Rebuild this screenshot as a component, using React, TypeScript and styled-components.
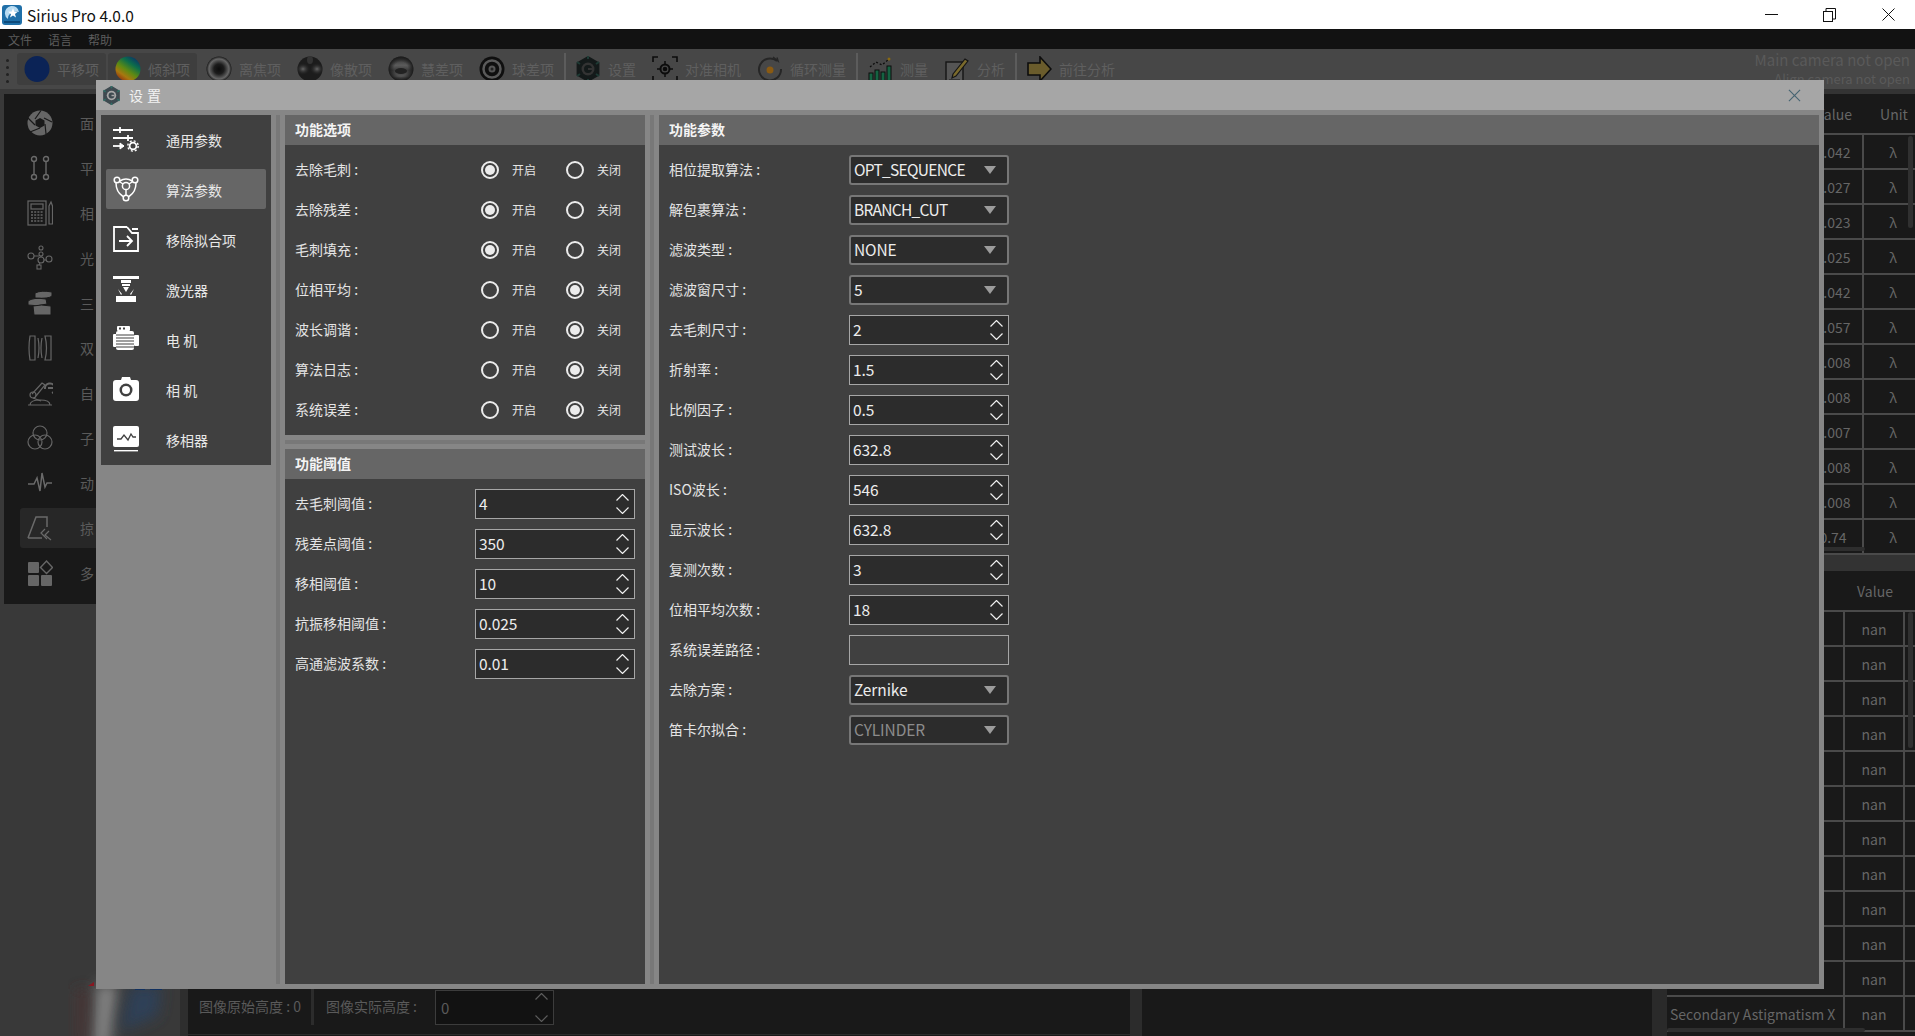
import React, { ReactNode } from 'react';
import styled, { createGlobalStyle } from 'styled-components';

const sans = `"Noto Sans CJK SC", "Noto Sans", sans-serif`;

const GlobalStyle = createGlobalStyle`
  html, body {
    margin: 0;
    padding: 0;
    background: #333;
    font-family: ${sans};
  }
`;

const Page = styled.div`
  position: relative;
  width: 1915px;
  height: 1036px;
  overflow: hidden;
  display: flex;
  flex-direction: column;
  background: #393939;
`;

/* window chrome */
const TitleBar = styled.div`
  height: 29px;
  flex: none;
  background: #fff;
  display: flex;
  align-items: center;
  padding-left: 2px;
  color: #111;
  font-size: 15.5px;
`;

const TitleText = styled.span`
  flex: 1;
  margin-left: 5px;
  font-family: ${sans};
`;

const WindowButton = styled.div`
  width: 58.5px;
  height: 29px;
  box-sizing: border-box;
  padding-left: 5px;
  display: flex;
  align-items: center;
  justify-content: center;
`;

const MenuBar = styled.div`
  height: 20px;
  flex: none;
  background: #121212;
  display: flex;
  align-items: center;
  gap: 16px;
  padding-left: 8px;
  color: #5c5c5c;
  font-size: 12px;
`;

const Toolbar = styled.div`
  height: 40px;
  flex: none;
  box-sizing: border-box;
  background: #474747;
  display: flex;
  align-items: flex-start;
  padding: 4px 5px 0 5px;
  color: #5f5f5f;
  font-size: 14px;
`;

const Grip = styled.div`
  width: 4px;
  height: 24px;
  margin: 6px 8px 0 0;
  display: flex;
  flex-direction: column;
  justify-content: space-between;
  align-items: center;
  & > i {
    width: 3px;
    height: 3px;
    border-radius: 50%;
    background: #222;
  }
`;

const ToolButton = styled.div<{ $active?: boolean }>`
  height: 32px;
  display: flex;
  align-items: center;
  gap: 7px;
  padding: 0 7px;
  margin-right: 2px;
  border-radius: 3px;
  background: ${(p) => (p.$active ? '#3e3e3e' : 'transparent')};
  white-space: nowrap;
`;

const ToolSep = styled.div`
  width: 2px;
  height: 32px;
  margin: 0 2px 0 1px;
  background: #5c5c5c;
`;

const CameraStatus = styled.div`
  margin: -3px 0 0 auto;
  display: flex;
  flex-direction: column;
  align-items: flex-end;
  line-height: 19px;
  font-size: 15px;
  color: #5a5a5a;
  & > span + span {
    font-size: 13px;
  }
`;

/* dimmed main window behind the dialog */
const Workspace = styled.div`
  flex: 1;
  min-height: 0;
  display: flex;
`;

const LeftColumn = styled.div`
  width: 180px;
  flex: none;
  position: relative;
  padding: 5px 0 0 4px;
  box-sizing: border-box;
`;

const LeftPanel = styled.div`
  height: 510px;
  background: #191919;
  padding: 9px 0 0 16px;
  box-sizing: border-box;
  display: flex;
  flex-direction: column;
  gap: 5px;
`;

const LeftItem = styled.div<{ $active?: boolean }>`
  height: 40px;
  display: flex;
  align-items: center;
  gap: 27px;
  padding-left: 7px;
  border-radius: 3px;
  background: ${(p) => (p.$active ? '#272727' : 'transparent')};
  color: #5a5a5a;
  font-size: 14px;
`;

const Watermark = styled.svg`
  position: absolute;
  left: 50px;
  bottom: 0;
`;

const VBar = styled.div`
  width: 8px;
  flex: none;
  background: #2e2e2e;
`;

const Center = styled.div`
  flex: 1;
  min-width: 0;
  display: flex;
  flex-direction: column;
  justify-content: flex-end;
  background: #191919;
`;

const BottomBar = styled.div`
  height: 47px;
  display: flex;
  align-items: flex-start;
  color: #5a5a5a;
  font-size: 14px;
`;

const BottomInfo = styled.div`
  width: 942px;
  height: 46px;
  flex: none;
  display: flex;
  align-items: flex-start;
  padding-left: 11px;
  box-sizing: border-box;
  border-bottom: 1px solid #2c2c2c;
`;

const InfoText = styled.span`
  height: 36px;
  padding-bottom: 2px;
  box-sizing: border-box;
  display: flex;
  align-items: center;
  white-space: pre;
`;

const InfoSep = styled.div`
  width: 3px;
  height: 36px;
  margin: 0 12px 0 10px;
  background: #2c2c2c;
`;

const GhostSpin = styled.div`
  width: 119px;
  height: 35px;
  margin: 1px 0 0 18px;
  border: 1px solid #3c3c3c;
  box-sizing: border-box;
  display: flex;
  align-items: center;
  justify-content: space-between;
  padding: 0 5px;
  background: #121212;
  font-size: 15px;
`;

const GhostArrows = styled.div`
  display: flex;
  flex-direction: column;
  gap: 15px;
`;

const BarDivider = styled.div`
  width: 12px;
  flex: none;
  align-self: stretch;
  background: #2c2c2c;
`;

const RightColumn = styled.div`
  width: 263px;
  flex: none;
  display: flex;
  background: #333;
`;

const RightGutter = styled.div`
  width: 15px;
  flex: none;
  background: #2a2a2a;
`;

const Tables = styled.div`
  flex: 1;
  min-width: 0;
  overflow: hidden;
  display: flex;
  flex-direction: column;
  padding-top: 5px;
`;

const TableBox = styled.div<{ $height: number }>`
  position: relative;
  height: ${(p) => p.$height}px;
  flex: none;
  overflow: hidden;
  background: #191919;
  color: #666;
  font-size: 14px;
`;

const TableGap = styled.div`
  height: 16px;
  flex: none;
  background: #333;
`;

const TableRow = styled.div<{ $cols: string; $height: number }>`
  display: grid;
  grid-template-columns: ${(p) => p.$cols};
  height: ${(p) => p.$height}px;
  box-sizing: border-box;
  border-bottom: 2px solid #4a4a4a;
`;

const Cell = styled.div<{ $left?: boolean }>`
  display: flex;
  align-items: center;
  justify-content: ${(p) => (p.$left ? 'flex-start' : 'center')};
  padding-left: ${(p) => (p.$left ? '3px' : '0')};
  white-space: nowrap;
  overflow: hidden;
  box-sizing: border-box;
  border-right: 2px solid #4a4a4a;
`;

const HeadCell = styled.div`
  display: flex;
  align-items: center;
  justify-content: center;
  color: #666;
`;

const ScrollV = styled.div<{ $top: number; $height: number }>`
  position: absolute;
  left: 241px;
  top: ${(p) => p.$top}px;
  width: 5px;
  height: ${(p) => p.$height}px;
  border-radius: 3px;
  background: #303030;
`;

const ScrollH = styled.div`
  position: absolute;
  left: 0;
  bottom: 4px;
  width: 198px;
  height: 4px;
  border-radius: 2px;
  background: #2e2e2e;
`;

/* settings dialog */
const Dialog = styled.div`
  position: absolute;
  left: 96px;
  top: 80px;
  width: 1728px;
  height: 909px;
  background: #868686;
  display: flex;
  flex-direction: column;
`;

const DialogHeader = styled.div`
  height: 30px;
  flex: none;
  background: #a6a6a6;
  display: flex;
  align-items: center;
  padding: 0 23px 0 6px;
  gap: 8px;
  color: #f2f2f2;
  font-size: 14px;
`;

const DialogTitle = styled.span`
  flex: 1;
  letter-spacing: 4px;
`;

const DialogBody = styled.div`
  flex: 1;
  min-height: 0;
  display: flex;
  padding: 5px;
  color: #e4e4e4;
`;

const Nav = styled.div`
  width: 170px;
  height: 350px;
  flex: none;
  background: #404040;
  padding: 4px 5px 0;
  box-sizing: border-box;
  display: flex;
  flex-direction: column;
  gap: 10px;
`;

const NavItem = styled.div<{ $active?: boolean }>`
  height: 40px;
  flex: none;
  display: flex;
  align-items: center;
  gap: 27px;
  padding-left: 7px;
  border-radius: 2px;
  background: ${(p) => (p.$active ? '#666' : 'transparent')};
  color: #e8e8e8;
  font-size: 14px;
  white-space: pre;
`;

const NavLabel = styled.span`
  padding-top: 2px;
`;

const SplitV = styled.div`
  width: 14px;
  flex: none;
  display: flex;
  justify-content: center;
  &::after {
    content: '';
    width: 4px;
    background: #787878;
  }
`;

const SplitH = styled.div`
  height: 14px;
  flex: none;
  display: flex;
  flex-direction: column;
  justify-content: center;
  &::after {
    content: '';
    height: 4px;
    background: #787878;
  }
`;

const MiddleColumn = styled.div`
  width: 360px;
  flex: none;
  display: flex;
  flex-direction: column;
`;

const Panel = styled.div<{ $height?: number }>`
  background: #404040;
  display: flex;
  flex-direction: column;
  ${(p) => (p.$height ? `height: ${p.$height}px; flex: none;` : 'flex: 1; min-width: 0;')}
`;

const PanelHeader = styled.div`
  height: 30px;
  flex: none;
  box-sizing: border-box;
  display: flex;
  align-items: center;
  padding: 0 0 2px 10px;
  background: #666;
  color: #f4f4f4;
  font-size: 14px;
  font-weight: 700;
`;

const Rows = styled.div`
  display: flex;
  flex-direction: column;
  gap: 10px;
  padding: 10px 10px 0;
`;

const FormRow = styled.div`
  height: 30px;
  display: flex;
  align-items: center;
  font-size: 14px;
`;

const FormLabel = styled.span<{ $width: number }>`
  width: ${(p) => p.$width}px;
  flex: none;
  padding-bottom: 2px;
  white-space: pre;
`;

const RadioOption = styled.div`
  width: 85px;
  flex: none;
  display: flex;
  align-items: center;
  gap: 13px;
  font-size: 12px;
`;

const RadioText = styled.span`
  padding-bottom: 2px;
`;

const RadioRing = styled.span<{ $on?: boolean }>`
  width: 18px;
  height: 18px;
  flex: none;
  box-sizing: border-box;
  border: 2px solid #ececec;
  border-radius: 50%;
  display: flex;
  align-items: center;
  justify-content: center;
  &::after {
    content: '';
    width: 10px;
    height: 10px;
    border-radius: 50%;
    background: ${(p) => (p.$on ? '#ececec' : 'transparent')};
  }
`;

const Field = styled.div<{ $muted?: boolean; $blank?: boolean; $combo?: boolean }>`
  width: 160px;
  height: 30px;
  flex: none;
  box-sizing: border-box;
  display: flex;
  align-items: center;
  justify-content: space-between;
  padding: 0 10px 0 3px;
  background: ${(p) => (p.$blank ? 'transparent' : '#2c2c2c')};
  border: ${(p) => (p.$combo ? '2px solid #777' : '1px solid #a6a6a6')};
  border-radius: ${(p) => (p.$combo ? '3px' : '0')};
  color: ${(p) => (p.$muted ? '#8c8c8c' : '#ececec')};
  font-size: 15.5px;
`;

const FieldValue = styled.span<{ $tight?: boolean }>`
  padding-bottom: 2px;
  letter-spacing: ${(p) => (p.$tight ? '-0.7px' : '-0.1px')};
`;

const SpinArrows = styled.div`
  display: flex;
  flex-direction: column;
  gap: 6px;
  margin-right: -5px;
`;

const ComboArrow = styled.i`
  width: 0;
  height: 0;
  margin-right: 1px;
  border-left: 6px solid transparent;
  border-right: 6px solid transparent;
  border-top: 8px solid #9c9c9c;
`;

/* little shared drawings */
type IconProps = { children: ReactNode; color?: string; size?: number };

const Ico = ({ children, color = 'currentColor', size = 26 }: IconProps) => (
  <svg width={size} height={size} viewBox="0 0 26 26" fill="none" stroke={color} strokeWidth="1.3" style={{ flex: 'none' }}>
    {children}
  </svg>
);

const Chevron = ({ up, color = '#f0f0f0' }: { up?: boolean; color?: string }) => (
  <svg width="13" height="7" viewBox="0 0 13 7" fill="none" stroke={color} strokeWidth="1.2" style={{ display: 'block' }}>
    <polyline points={up ? '0.5,6.5 6.5,0.5 12.5,6.5' : '0.5,0.5 6.5,6.5 12.5,0.5'} />
  </svg>
);

const Gear = ({ body, hole, tips }: { body: string; hole: string; tips: string }) => (
  <>
    <path d="M13 1 L23.4 7 V19 L13 25 L2.6 19 V7 Z" fill={body} stroke={body} strokeWidth="2" strokeLinejoin="round" />
    <path d="M13 0 V3 M2 6 L5 8 M24 6 L21 8 M2 20 L5 18 M24 20 L21 18 M13 26 V23" stroke={tips} strokeWidth="2" />
    <circle cx="13" cy="13" r="6.5" fill={hole} stroke="none" />
    <circle cx="13" cy="13" r="4" fill={body} stroke="none" />
    <rect x="13" y="12" width="4" height="2" fill={hole} stroke="none" />
  </>
);

const AppLogo = () => (
  <svg width="20" height="20" viewBox="0 0 20 20" style={{ flex: 'none' }}>
    <rect width="20" height="20" rx="3" fill="#1f6fa8" />
    <path d="M3 9 a7 7 0 0 1 14 -2 a8 8 0 0 0 -7 1 a6 6 0 0 0 -4 6 a6 6 0 0 1 -3 -5z" fill="#b9dcf2" />
    <path d="M11 3 l1.2 3.5 3.6 .2 -2.8 2.2 1 3.5 -3 -2 -3 2 1 -3.5 -2.8 -2.2 3.6 -.2z" fill="#fff" />
    <rect x="2" y="16" width="16" height="2" fill="#0e4a7a" />
  </svg>
);

const toolIcons: Record<string, ReactNode> = {
  shift: <ellipse cx="13" cy="13" rx="12.5" ry="13" fill="#0b2356" stroke="none" />,
  tilt: (
    <>
      <defs>
        <linearGradient id="tiltFill" x1="0.85" y1="0" x2="0.15" y2="1">
          <stop offset="0" stopColor="#0a2a6e" />
          <stop offset="0.3" stopColor="#0d6e4a" />
          <stop offset="0.55" stopColor="#5f8a12" />
          <stop offset="0.75" stopColor="#a8780f" />
          <stop offset="1" stopColor="#8a1d10" />
        </linearGradient>
      </defs>
      <circle cx="13" cy="13" r="12.5" fill="url(#tiltFill)" stroke="none" />
    </>
  ),
  defocus: (
    <>
      <defs>
        <radialGradient id="defocusFill">
          <stop offset="0" stopColor="#0c0c0c" />
          <stop offset="0.4" stopColor="#1c1c1c" />
          <stop offset="0.8" stopColor="#666" />
          <stop offset="1" stopColor="#1a1a1a" />
        </radialGradient>
        <radialGradient id="edgeFade">
          <stop offset="0.55" stopColor="#1a1a1a" stopOpacity="0" />
          <stop offset="1" stopColor="#1a1a1a" />
        </radialGradient>
      </defs>
      <circle cx="13" cy="13" r="12.5" fill="url(#defocusFill)" stroke="none" />
    </>
  ),
  astig: (
    <>
      <defs>
        <radialGradient id="astigBlob">
          <stop offset="0" stopColor="#666" />
          <stop offset="1" stopColor="#222" stopOpacity="0" />
        </radialGradient>
      </defs>
      <circle cx="13" cy="13" r="12.5" fill="#1c1c1c" stroke="none" />
      <ellipse cx="6" cy="13" rx="7" ry="6" fill="url(#astigBlob)" stroke="none" />
      <ellipse cx="20" cy="13" rx="7" ry="6" fill="url(#astigBlob)" stroke="none" />
      <ellipse cx="13" cy="4" rx="3" ry="4" fill="#333" stroke="none" />
    </>
  ),
  coma: (
    <>
      <defs>
        <linearGradient id="comaFill" x1="0" y1="0" x2="0" y2="1">
          <stop offset="0" stopColor="#2a2a2a" />
          <stop offset="0.35" stopColor="#5c5c5c" />
          <stop offset="0.55" stopColor="#3a3a3a" />
          <stop offset="0.8" stopColor="#555" />
          <stop offset="1" stopColor="#2a2a2a" />
        </linearGradient>
      </defs>
      <circle cx="13" cy="13" r="12.5" fill="url(#comaFill)" stroke="none" />
      <ellipse cx="13" cy="15" rx="6" ry="3" fill="#222" stroke="none" />
      <circle cx="13" cy="13" r="12.5" fill="url(#edgeFade)" stroke="none" />
    </>
  ),
  spherical: (
    <>
      <circle cx="13" cy="13" r="12.5" fill="#0f0f0f" stroke="none" />
      <circle cx="13" cy="13" r="8.5" fill="none" stroke="#5a5a5a" strokeWidth="2.5" />
      <circle cx="13" cy="13" r="3.5" fill="#555" stroke="none" />
      <circle cx="13" cy="13" r="1.5" fill="#222" stroke="none" />
    </>
  ),
  gear: <Gear body="#141a1a" hole="#333" tips="#1d3a34" />,
  target: (
    <g stroke="#0c0c0c" strokeWidth="1.6">
      <path d="M1 6 V1 H6 M20 1 H25 V6 M1 20 V25 H6 M20 25 H25 V20" />
      <circle cx="13" cy="13" r="4.5" strokeWidth="2" />
      <circle cx="13" cy="13" r="1.5" fill="#0c0c0c" />
      <path d="M13 5 V8.5 M13 17.5 V21 M5 13 H8.5 M17.5 13 H21" strokeWidth="1.5" />
    </g>
  ),
  cycle: (
    <>
      <path d="M20 5 A11 11 0 1 0 24 13" stroke="#262626" strokeWidth="2" />
      <path d="M16 1 L21 5 L20 1.5" stroke="#262626" strokeWidth="1.5" />
      <circle cx="13" cy="14" r="3.5" fill="#8a5a12" stroke="none" />
    </>
  ),
  chart: (
    <>
      <rect x="2" y="17" width="4" height="8" fill="#156342" stroke="#0d0d0d" strokeWidth="1" />
      <rect x="8" y="14" width="4" height="11" fill="#156342" stroke="#0d0d0d" strokeWidth="1" />
      <rect x="14" y="16" width="4" height="9" fill="#156342" stroke="#0d0d0d" strokeWidth="1" />
      <rect x="20" y="10" width="4" height="15" fill="#156342" stroke="#0d0d0d" strokeWidth="1" />
      <path d="M3 11 L9 6 L15 9 L22 3" stroke="#0d0d0d" strokeDasharray="2 2" />
      <circle cx="22" cy="3" r="1.5" fill="#8a6a12" stroke="none" />
    </>
  ),
  edit: (
    <>
      <rect x="2" y="6" width="17" height="20" fill="#555" stroke="#151515" strokeWidth="1.4" />
      <path d="M9 18 L21 3 L24 5 L12 20 L8 22 Z" fill="#7a6a2c" stroke="#151515" strokeWidth="1.2" />
      <path d="M5 24 H16" stroke="#222" />
    </>
  ),
  arrow: (
    <path d="M2 7 H14 V1 L25 13 L14 25 V19 H2 Z" fill="#6a5c2c" stroke="#0d0d0d" strokeWidth="1.6" />
  ),
};

const leftIcons: ReactNode[] = [
  <>
    <circle cx="13" cy="13" r="12.5" fill="#666" stroke="none" />
    <path d="M8 9 L14 0.5 M17 8 L25 12 M18 14 L19 24 M13 18 L3 22 M8 15 L1 8" stroke="#191919" strokeWidth="1.2" />
    <path d="M13 8 L17.5 10.5 V15.5 L13 18 L8.5 15.5 V10.5 Z" fill="#191919" stroke="none" />
  </>,
  <g stroke="#6a6a6a" strokeWidth="1.4">
    <circle cx="7" cy="4" r="2.5" />
    <circle cx="19" cy="4" r="2.5" />
    <circle cx="7" cy="22" r="2.5" />
    <circle cx="19" cy="22" r="2.5" />
    <path d="M7 6.5 V19.5 M19 6.5 V19.5" />
  </g>,
  <g stroke="#666" strokeWidth="1.2">
    <rect x="1" y="1" width="18" height="24" />
    <rect x="4" y="4" width="12" height="5" />
    <path d="M4 12 H16 M4 15 H16 M4 18 H16 M4 21 H16" strokeDasharray="2 1.2" strokeWidth="1.6" />
    <path d="M22 6 L24 2 L25.5 6 V24 H22 Z" />
  </g>,
  <g stroke="#666" strokeWidth="1.1">
    <circle cx="4" cy="11" r="3" />
    <circle cx="14" cy="3" r="2" />
    <circle cx="14" cy="9" r="2" />
    <circle cx="14" cy="15" r="3" />
    <circle cx="22" cy="14" r="3" />
    <rect x="10" y="20" width="4" height="4" />
    <path d="M7 11 H12 M14 11 V12 M17 15 H19 M13 18 L12 20" />
  </g>,
  <g fill="#666" stroke="#191919" strokeWidth="1">
    <path d="M8 3 Q14 0 25 2 L25 6 Q22 9 8 8 Z" />
    <path d="M1 11 Q6 7 19 9 L20 14 Q10 17 1 15 Z" />
    <path d="M6 16 Q14 14 24 16 V25 H7 Z" />
  </g>,
  <g stroke="#666" strokeWidth="1.2">
    <path d="M3 1 H8 V25 H3 Q1 13 3 1Z" />
    <path d="M18 1 H24 V25 H18 Q21 13 18 1Z" />
    <path d="M11 3 Q13 13 11 23 M15 3 Q13 13 15 23" />
  </g>,
  <g stroke="#666" strokeWidth="1.2">
    <path d="M1 25 H25 M3 25 Q3 20 13 20 Q23 20 23 25" />
    <path d="M5 14 L15 3 L18 5 L9 16" />
    <circle cx="6" cy="15" r="3" />
    <path d="M6 18 L14 21" />
    <path d="M18 9 A5 5 0 1 1 25 13 M21 8 L26 8" strokeWidth="2" />
  </g>,
  <g stroke="#666" strokeWidth="1.2">
    <circle cx="13" cy="8" r="7" />
    <circle cx="8" cy="17" r="7" />
    <circle cx="18" cy="17" r="7" />
  </g>,
  <path d="M1 14 H7 L10 8 L13 21 L15 3 L18 17 L20 13 H25" stroke="#6a6a6a" strokeWidth="1.5" />,
  <g stroke="#6a6a6a" strokeWidth="1.5">
    <path d="M1 23 L9 2 H20 V12 M1 23 H15" />
    <path d="M18 14 L14 18 L20 24 M22 16 L18 20 L24 25" strokeWidth="1.2" />
  </g>,
  <g fill="#666" stroke="none">
    <rect x="1" y="2" width="11" height="11" rx="1" />
    <rect x="1" y="15" width="11" height="11" rx="1" />
    <rect x="14" y="15" width="11" height="11" rx="1" />
    <path d="M19.5 1 L25.5 7.5 L19.5 13.5 L13.5 7.5 Z" fill="none" stroke="#666" strokeWidth="1.4" />
  </g>,
];

const navIcons: ReactNode[] = [
  <g stroke="#fff" strokeWidth="1.8">
    <path d="M0 4 H20 M7 1 V7" />
    <path d="M0 12 H20 M15 9 V15" />
    <path d="M0 20 H11" />
    <path d="M7 17 L11 20 L7 23 Z" fill="#fff" strokeWidth="1" />
    <circle cx="20" cy="20" r="3.4" />
    <circle cx="20" cy="20" r="5.2" strokeDasharray="2 2.1" strokeWidth="1.4" />
  </g>,
  <g stroke="#fff" strokeWidth="1.5">
    <circle cx="4" cy="4" r="2.8" />
    <circle cx="22" cy="4" r="2.8" />
    <circle cx="13" cy="22" r="2.8" />
    <circle cx="13" cy="10" r="3.6" />
    <path d="M6.8 5 Q13 1 19.2 5 M3 7 Q3 16 10 20.5 M23 7 Q23 16 16 20.5 M13 14 V19 M7 6 L10 8 M19 6 L16 8" />
  </g>,
  <g stroke="#fff" strokeWidth="1.8">
    <path d="M19 3 H25 M14 1 L19 7 H25 V25 H1 V1 H14" />
    <path d="M6 15 H19 M14 10 L19 15 L14 20" strokeWidth="1.8" />
  </g>,
  <g fill="#fff" stroke="none">
    <rect x="0" y="0" width="26" height="3" />
    <rect x="8" y="4" width="10" height="3" />
    <rect x="9" y="8" width="8" height="2" />
    <path d="M10 11 H16 L13 16 Z" />
    <path d="M5 13 L9 18 L8 19 Z M21 13 L17 18 L18 19 Z" />
    <rect x="3" y="20" width="20" height="6" />
  </g>,
  <g fill="#fff" stroke="none">
    <rect x="4" y="0" width="13" height="5" rx="1" />
    <rect x="6" y="1.5" width="2" height="2" fill="#404040" />
    <rect x="10" y="1.5" width="2" height="2" fill="#404040" />
    <rect x="3" y="5" width="18" height="19" rx="2" />
    <rect x="0" y="8" width="4" height="13" rx="1" />
    <rect x="21" y="9" width="5" height="11" rx="1" />
    <path d="M3 9 H21 M3 12 H21 M3 15 H21 M3 18 H21 M3 21 H21" stroke="#404040" strokeWidth="1.2" />
  </g>,
  <g stroke="none">
    <path d="M3 4 H8 L9 1 H17 L18 4 H23 Q26 4 26 7 V22 Q26 25 23 25 H3 Q0 25 0 22 V7 Q0 4 3 4Z" fill="#fff" />
    <circle cx="13" cy="14" r="6.5" fill="#404040" />
    <circle cx="13" cy="14" r="4" fill="#fff" />
  </g>,
  <g stroke="none">
    <rect x="0" y="0" width="26" height="21" rx="2" fill="#fff" />
    <rect x="1" y="24" width="24" height="1.4" fill="#fff" />
    <path d="M4 13 H8 L11 9 L15 14 L18 8 L20 11 H23" fill="none" stroke="#404040" strokeWidth="1.3" />
  </g>,
];

const tools = [
  { icon: 'shift', label: '平移项', active: true },
  { icon: 'tilt', label: '倾斜项', active: true },
  { icon: 'defocus', label: '离焦项' },
  { icon: 'astig', label: '像散项' },
  { icon: 'coma', label: '慧差项' },
  { icon: 'spherical', label: '球差项' },
  { sep: true },
  { icon: 'gear', label: '设置' },
  { icon: 'target', label: '对准相机' },
  { icon: 'cycle', label: '循环测量' },
  { sep: true },
  { icon: 'chart', label: '测量' },
  { icon: 'edit', label: '分析' },
  { sep: true },
  { icon: 'arrow', label: '前往分析' },
];

const leftLabels = ['面', '平', '相', '光', '三', '双', '自', '子', '动', '掠', '多'];
const navLabels = ['通用参数', '算法参数', '移除拟合项', '激光器', '电 机', '相 机', '移相器'];

const options: [string, boolean][] = [
  ['去除毛刺 :', true],
  ['去除残差 :', true],
  ['毛刺填充 :', true],
  ['位相平均 :', false],
  ['波长调谐 :', false],
  ['算法日志 :', false],
  ['系统误差 :', false],
];

const thresholds: [string, string][] = [
  ['去毛刺阈值 :', '4'],
  ['残差点阈值 :', '350'],
  ['移相阈值 :', '10'],
  ['抗振移相阈值 :', '0.025'],
  ['高通滤波系数 :', '0.01'],
];

type Param = { label: string; value?: string; kind: 'combo' | 'spin' | 'text'; muted?: boolean };

const params: Param[] = [
  { label: '相位提取算法 :', value: 'OPT_SEQUENCE', kind: 'combo' },
  { label: '解包裹算法 :', value: 'BRANCH_CUT', kind: 'combo' },
  { label: '滤波类型 :', value: 'NONE', kind: 'combo' },
  { label: '滤波窗尺寸 :', value: '5', kind: 'combo' },
  { label: '去毛刺尺寸 :', value: '2', kind: 'spin' },
  { label: '折射率 :', value: '1.5', kind: 'spin' },
  { label: '比例因子 :', value: '0.5', kind: 'spin' },
  { label: '测试波长 :', value: '632.8', kind: 'spin' },
  { label: 'ISO波长 :', value: '546', kind: 'spin' },
  { label: '显示波长 :', value: '632.8', kind: 'spin' },
  { label: '复测次数 :', value: '3', kind: 'spin' },
  { label: '位相平均次数 :', value: '18', kind: 'spin' },
  { label: '系统误差路径 :', kind: 'text' },
  { label: '去除方案 :', value: 'Zernike', kind: 'combo' },
  { label: '笛卡尔拟合 :', value: 'CYLINDER', kind: 'combo', muted: true },
];

const topValues = ['0.042', '0.027', '0.023', '0.025', '0.042', '0.057', '0.008', '0.008', '0.007', '0.008', '0.008', '0.74'];

const SpinBox = ({ value }: { value: string }) => (
  <Field>
    <FieldValue>{value}</FieldValue>
    <SpinArrows>
      <Chevron up />
      <Chevron />
    </SpinArrows>
  </Field>
);

const ParamField = ({ param }: { param: Param }) => {
  if (param.kind === 'spin') return <SpinBox value={param.value ?? ''} />;
  if (param.kind === 'text') return <Field $blank />;
  const value = param.value ?? '';
  return (
    <Field $combo $muted={param.muted}>
      <FieldValue $tight={value.length > 8 && value === value.toUpperCase()}>{value}</FieldValue>
      <ComboArrow />
    </Field>
  );
};

const topCols = '137px 60px 60px';
const bottomCols = '178px 60px 20px';

export default function App() {
  return (
    <Page>
      <GlobalStyle />
      <TitleBar>
        <AppLogo />
        <TitleText>Sirius Pro 4.0.0</TitleText>
        <WindowButton>
          <svg width="13" height="13" viewBox="0 0 13 13" stroke="#111" fill="none"><path d="M0 6.5 H13" /></svg>
        </WindowButton>
        <WindowButton>
          <svg width="13" height="14" viewBox="0 0 13 14" stroke="#111" fill="none"><rect x="0.5" y="3.5" width="9" height="10" /><path d="M3 3.5 V0.5 H12.5 V11 H9.5" /></svg>
        </WindowButton>
        <WindowButton>
          <svg width="13" height="13" viewBox="0 0 13 13" stroke="#111" fill="none"><path d="M0.5 0.5 L12.5 12.5 M12.5 0.5 L0.5 12.5" /></svg>
        </WindowButton>
      </TitleBar>

      <MenuBar>
        <span>文件</span>
        <span>语言</span>
        <span>帮助</span>
      </MenuBar>

      <Toolbar>
        <Grip>
          <i />
          <i />
          <i />
          <i />
        </Grip>
        {tools.map((tool, index) =>
          tool.sep ? (
            <ToolSep key={index} />
          ) : (
            <ToolButton key={index} $active={tool.active}>
              <Ico>{toolIcons[tool.icon as string]}</Ico>
              {tool.label}
            </ToolButton>
          ),
        )}
        <CameraStatus>
          <span>Main camera not open</span>
          <span>Align camera not open</span>
        </CameraStatus>
      </Toolbar>

      <Workspace>
        <LeftColumn>
          <LeftPanel>
            {leftLabels.map((label, index) => (
              <LeftItem key={label} $active={index === 9}>
                <Ico>{leftIcons[index]}</Ico>
                {label}
              </LeftItem>
            ))}
          </LeftPanel>
          <Watermark width="130" height="76" viewBox="0 0 130 76">
            <defs>
              <filter id="smear" x="-60%" y="-60%" width="220%" height="220%">
                <feGaussianBlur stdDeviation="7" />
              </filter>
            </defs>
            <path d="M46 24 L68 24 L60 90 L42 90 Z" fill="#828282" filter="url(#smear)" />
            <path d="M80 26 L112 26 L108 56 L70 72 Z" fill="#2f4157" filter="url(#smear)" />
            <path d="M26 30 L38 28 L36 90 L26 90 Z" fill="#4a3434" filter="url(#smear)" />
            <path d="M38 26 L44 22 L44 26 Z" fill="#8a1620" />
            <path d="M85 29 H95 M100 29 H112" stroke="#10305f" strokeWidth="2" />
          </Watermark>
        </LeftColumn>
        <VBar />
        <Center>
          <BottomBar>
            <BottomInfo>
              <InfoText>图像原始高度 : 0</InfoText>
              <InfoSep />
              <InfoText>图像实际高度 :</InfoText>
              <GhostSpin>
                0
                <GhostArrows>
                  <Chevron up color="#5c5c5c" />
                  <Chevron color="#5c5c5c" />
                </GhostArrows>
              </GhostSpin>
            </BottomInfo>
            <BarDivider />
          </BottomBar>
        </Center>
        <RightColumn>
          <RightGutter />
          <Tables>
            <TableBox $height={461}>
              <TableRow $cols={topCols} $height={41}>
                <HeadCell />
                <HeadCell>Value</HeadCell>
                <HeadCell>Unit</HeadCell>
              </TableRow>
              {topValues.map((value, index) => (
                <TableRow key={index} $cols={topCols} $height={35}>
                  <Cell />
                  <Cell>{value}</Cell>
                  <Cell>λ</Cell>
                </TableRow>
              ))}
              <ScrollV $top={42} $height={92} />
              <ScrollH />
            </TableBox>
            <TableGap />
            <TableBox $height={465}>
              <TableRow $cols={bottomCols} $height={41}>
                <HeadCell />
                <HeadCell>Value</HeadCell>
                <HeadCell />
              </TableRow>
              {Array.from({ length: 12 }, (_, index) => (
                <TableRow key={index} $cols={bottomCols} $height={35}>
                  <Cell $left>{index === 11 ? 'Secondary Astigmatism X' : ''}</Cell>
                  <Cell>nan</Cell>
                  <Cell />
                </TableRow>
              ))}
              <ScrollV $top={41} $height={136} />
              <ScrollH />
            </TableBox>
          </Tables>
        </RightColumn>
      </Workspace>

      <Dialog>
        <DialogHeader>
          <Ico size={19}><Gear body="#3e4a50" hole="#a6a6a6" tips="#2f6f66" /></Ico>
          <DialogTitle>设置</DialogTitle>
          <svg width="13" height="13" viewBox="0 0 14 14" stroke="#466472" strokeWidth="1.2" fill="none"><path d="M1 1 L13 13 M13 1 L1 13" /></svg>
        </DialogHeader>
        <DialogBody>
          <Nav>
            {navLabels.map((label, index) => (
              <NavItem key={label} $active={index === 1}>
                <Ico>{navIcons[index]}</Ico>
                <NavLabel>{label}</NavLabel>
              </NavItem>
            ))}
          </Nav>
          <SplitV />
          <MiddleColumn>
            <Panel $height={320}>
              <PanelHeader>功能选项</PanelHeader>
              <Rows>
                {options.map(([label, on]) => (
                  <FormRow key={label}>
                    <FormLabel $width={186}>{label}</FormLabel>
                    <RadioOption>
                      <RadioRing $on={on} />
                      <RadioText>开启</RadioText>
                    </RadioOption>
                    <RadioOption>
                      <RadioRing $on={!on} />
                      <RadioText>关闭</RadioText>
                    </RadioOption>
                  </FormRow>
                ))}
              </Rows>
            </Panel>
            <SplitH />
            <Panel>
              <PanelHeader>功能阈值</PanelHeader>
              <Rows>
                {thresholds.map(([label, value]) => (
                  <FormRow key={label}>
                    <FormLabel $width={180}>{label}</FormLabel>
                    <SpinBox value={value} />
                  </FormRow>
                ))}
              </Rows>
            </Panel>
          </MiddleColumn>
          <SplitV />
          <Panel>
            <PanelHeader>功能参数</PanelHeader>
            <Rows>
              {params.map((param) => (
                <FormRow key={param.label}>
                  <FormLabel $width={180}>{param.label}</FormLabel>
                  <ParamField param={param} />
                </FormRow>
              ))}
            </Rows>
          </Panel>
        </DialogBody>
      </Dialog>
    </Page>
  );
}
